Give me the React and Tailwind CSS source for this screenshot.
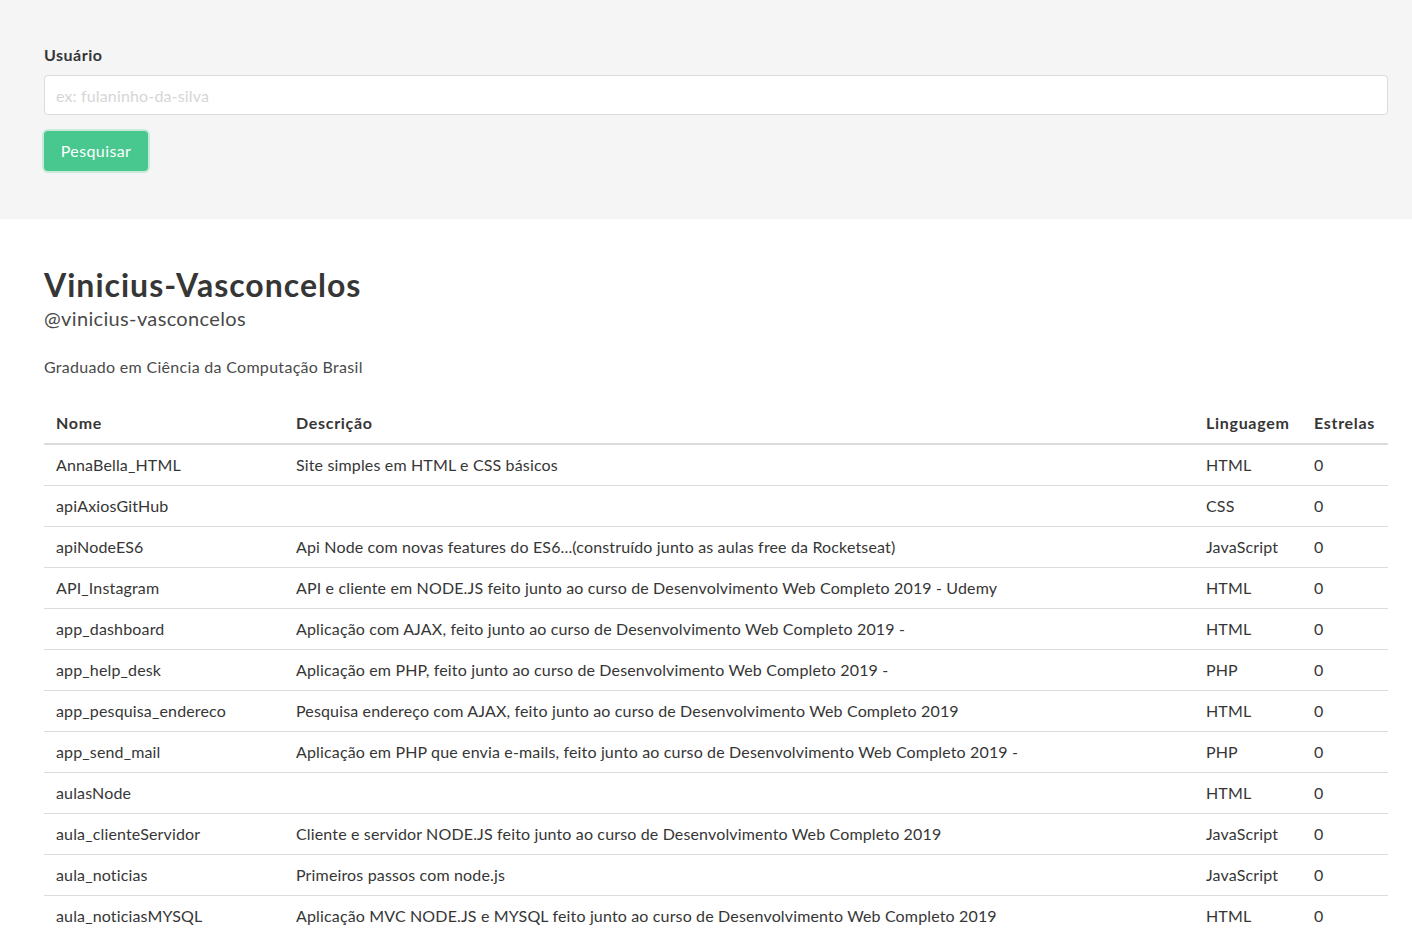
import React from "react";

const rows = [
  ["AnnaBella_HTML", "Site simples em HTML e CSS básicos", "HTML", "0"],
  ["apiAxiosGitHub", "", "CSS", "0"],
  ["apiNodeES6", "Api Node com novas features do ES6...(construído junto as aulas free da Rocketseat)", "JavaScript", "0"],
  ["API_Instagram", "API e cliente em NODE.JS feito junto ao curso de Desenvolvimento Web Completo 2019 - Udemy", "HTML", "0"],
  ["app_dashboard", "Aplicação com AJAX, feito junto ao curso de Desenvolvimento Web Completo 2019 -", "HTML", "0"],
  ["app_help_desk", "Aplicação em PHP, feito junto ao curso de Desenvolvimento Web Completo 2019 -", "PHP", "0"],
  ["app_pesquisa_endereco", "Pesquisa endereço com AJAX, feito junto ao curso de Desenvolvimento Web Completo 2019", "HTML", "0"],
  ["app_send_mail", "Aplicação em PHP que envia e-mails, feito junto ao curso de Desenvolvimento Web Completo 2019 -", "PHP", "0"],
  ["aulasNode", "", "HTML", "0"],
  ["aula_clienteServidor", "Cliente e servidor NODE.JS feito junto ao curso de Desenvolvimento Web Completo 2019", "JavaScript", "0"],
  ["aula_noticias", "Primeiros passos com node.js", "JavaScript", "0"],
  ["aula_noticiasMYSQL", "Aplicação MVC NODE.JS e MYSQL feito junto ao curso de Desenvolvimento Web Completo 2019", "HTML", "0"],
];

const th = "text-left font-bold tracking-[0.7px] px-[12px] py-[8px] border-b-2 border-[#dbdbdb]";
const td = "px-[12px] py-[8px] border-b border-[#dbdbdb] whitespace-nowrap";

export default function App() {
  return (
    <div className="h-[932px] overflow-hidden bg-white text-[#4a4a4a] text-[16px] leading-[24px] tracking-[0.15px] font-['Lato','Noto_Sans',sans-serif]">
      <section className="bg-[#f5f5f5] pl-[44px] pr-[24px] pt-[43px] pb-[48px]">
        <label className="block font-bold tracking-[0.5px] text-[#363636] mb-[8px]">Usuário</label>
        <input
          className="block w-full h-[40px] rounded-[4px] border border-[#dbdbdb] bg-white px-[11px] text-[#363636] placeholder:text-[#d6d6d6] outline-none"
          placeholder="ex: fulaninho-da-silva"
        />
        <div className="mt-[16px]">
          <button className="h-[40px] w-[104px] rounded-[4px] bg-[#48c78e] text-white tracking-[0.4px] shadow-[0_0_0_2px_rgba(72,199,142,0.25)]">
            Pesquisar
          </button>
        </div>
      </section>
      <section className="pl-[44px] pr-[24px] pt-[48px]">
        <h1 className="text-[32px] leading-[36px] font-bold tracking-[1px] text-[#363636]">Vinicius-Vasconcelos</h1>
        <h2 className="text-[20px] leading-[25px] tracking-[0.35px] text-[#4a4a4a] mt-[3px]">@vinicius-vasconcelos</h2>
        <p className="mt-[24px] tracking-[0.3px]">Graduado em Ciência da Computação Brasil</p>
        <table className="mt-[24px] w-full table-fixed border-collapse text-[#363636]">
          <colgroup>
            <col className="w-[240px]" />
            <col />
            <col className="w-[108px]" />
            <col className="w-[86px]" />
          </colgroup>
          <thead>
            <tr>
              <th className={th}>Nome</th>
              <th className={th}>Descrição</th>
              <th className={th}>Linguagem</th>
              <th className={th}>Estrelas</th>
            </tr>
          </thead>
          <tbody>
            {rows.map((r) => (
              <tr key={r[0]}>
                <td className={td}>{r[0]}</td>
                <td className={td}>{r[1]}</td>
                <td className={td}>{r[2]}</td>
                <td className={td}>{r[3]}</td>
              </tr>
            ))}
          </tbody>
        </table>
      </section>
    </div>
  );
}
